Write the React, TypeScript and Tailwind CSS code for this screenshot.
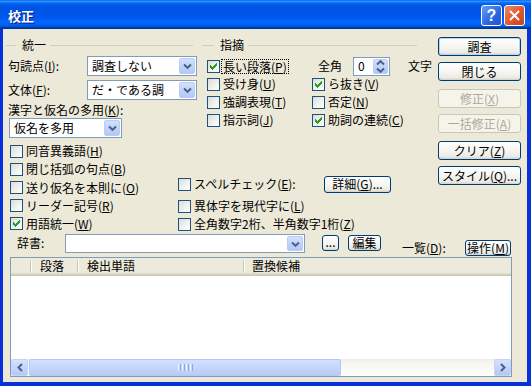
import React from "react";

const U = ({ c }: { c: string }) => (
  <span className="underline decoration-1 underline-offset-[1px]">{c}</span>
);

function Check({ on }: { on?: boolean }) {
  return (
    <span className="relative block w-[13px] h-[13px] shrink-0 border border-[#1C5180] bg-[linear-gradient(135deg,#DCDCD7_0%,#F4F4F0_65%,#FFFFFF_100%)]">
      {on && (
        <svg
          className="absolute left-[2px] top-[2px]"
          width="7"
          height="7"
          viewBox="0 0 7 7"
          shapeRendering="crispEdges"
        >
          <path
            fill="#21A121"
            d="M0 2h1v3h-1z M1 3h1v3h-1z M2 4h1v3h-1z M3 3h1v3h-1z M4 2h1v3h-1z M5 1h1v3h-1z M6 0h1v3h-1z"
          />
        </svg>
      )}
    </span>
  );
}

function Chevron({ up }: { up?: boolean }) {
  return (
    <svg width="9" height="6" viewBox="0 0 9 6">
      <path
        d={up ? "M1 4.5 L4.5 1.2 L8 4.5" : "M1 1.5 L4.5 4.8 L8 1.5"}
        stroke="#4D6185"
        strokeWidth="2"
        fill="none"
      />
    </svg>
  );
}

function Combo({ cls, text }: { cls: string; text?: string }) {
  return (
    <div className={`flex shrink-0 border border-[#7F9DB9] bg-white p-[1px] ${cls}`}>
      <span className="flex-1 flex items-center pl-[3px] whitespace-nowrap overflow-hidden">{text}</span>
      <span className="w-[16px] flex items-center justify-center rounded-[2px] border border-[#BACBF5] bg-[linear-gradient(180deg,#D3E0FD_0%,#C1D3FB_50%,#B3C8F7_100%)]">
        <Chevron />
      </span>
    </div>
  );
}

function Btn({
  children,
  cls,
  dis,
  def,
}: {
  children: React.ReactNode;
  cls: string;
  dis?: boolean;
  def?: boolean;
}) {
  const st = dis
    ? "border-[#C9C7BA] bg-[#F5F4EA] text-[#ACA899]"
    : "border-[#003C74] bg-[linear-gradient(180deg,#FFFFFF_0%,#F7F7F4_45%,#ECEBE6_85%,#D6D0C5_100%)] text-black";
  const d = def ? "shadow-[inset_0_0_0_1px_#B9D1F6]" : "";
  return (
    <div
      className={`flex items-center justify-center shrink-0 rounded-[3px] border whitespace-nowrap ${st} ${d} ${cls}`}
    >
      {children}
    </div>
  );
}

function CheckRow({ on, children, cls }: { on?: boolean; children: React.ReactNode; cls: string }) {
  return (
    <div className={`flex items-center ${cls}`}>
      <Check on={on} />
      <span className="ml-[3px] whitespace-nowrap">{children}</span>
    </div>
  );
}

function GroupHead({ title, cls, first }: { title: string; cls: string; first: string }) {
  return (
    <div className={`flex items-center h-[16px] mt-[8px] ${cls}`}>
      <span className={`h-px bg-[#D0D0BF] ${first}`} />
      <span className="ml-[6px] whitespace-nowrap">{title}</span>
      <span className="ml-[4px] h-px flex-1 bg-[#D0D0BF]" />
    </div>
  );
}

function Divider() {
  return <span className="w-[2px] h-[11px] self-center border-l border-[#C6C3B3] border-r border-r-white" />;
}

export default function App() {
  return (
    <div className="w-[531px] h-[386px] bg-[#0831D9] flex flex-col overflow-hidden text-[12px] leading-[14px] text-black font-['Noto_Sans_CJK_JP','Noto_Sans',sans-serif]">
      {/* Title bar */}
      <div className="h-[29px] shrink-0 flex items-center bg-[linear-gradient(180deg,#0058EE_0%,#3593FF_4%,#288EFF_6%,#127DFF_8%,#036FFC_10%,#0262EE_14%,#0057E5_20%,#0054E3_24%,#0055EB_56%,#005BF5_66%,#026AFE_76%,#0062EF_86%,#0052D6_92%,#0040AB_94%,#003092_100%)]">
        <span className="pl-[8px] pt-[3px] text-[13px] font-bold text-white [text-shadow:1px_1px_0_#0A1883]">
          校正
        </span>
        <div className="ml-auto mr-[6px] flex gap-[2px] pt-[2px]">
          <div className="w-[21px] h-[21px] rounded-[3px] border border-white flex items-center justify-center bg-[linear-gradient(135deg,#6A9CF7_0%,#2A64E3_60%,#1F55D3_100%)] text-white font-bold text-[16px] leading-[16px] font-['Liberation_Sans',sans-serif]">
            ?
          </div>
          <div className="w-[21px] h-[21px] rounded-[3px] border border-white flex items-center justify-center bg-[linear-gradient(135deg,#EE8A68_0%,#E05A33_50%,#C8411F_100%)]">
            <svg width="11" height="11" viewBox="0 0 11 11">
              <path d="M1 1 L10 10 M10 1 L1 10" stroke="white" strokeWidth="2" />
            </svg>
          </div>
        </div>
      </div>

      {/* Body */}
      <div className="ml-[3px] mr-[4px] mb-[4px] h-[353px] bg-[#ECE9D8] flex flex-col">
        {/* Top section */}
        <div className="flex h-[204px] shrink-0">
          <div className="w-[435px] flex flex-col">
            {/* Row 1 */}
            <div className="flex h-[112px]">
              {/* 統一 */}
              <div className="w-[195px] flex flex-col">
                <GroupHead title="統一" cls="pl-[3px] mr-[5px]" first="w-[10px]" />
                <div className="mt-[3px] h-[20px] flex items-center pl-[5px]">
                  <span className="w-[79px] whitespace-nowrap">
                    句読点(<U c="I" />):
                  </span>
                  <Combo cls="w-[110px] h-[20px]" text="調査しない" />
                </div>
                <div className="mt-[4px] h-[20px] flex items-center pl-[5px]">
                  <span className="w-[79px] whitespace-nowrap">
                    文体(<U c="F" />):
                  </span>
                  <Combo cls="w-[110px] h-[20px]" text="だ・である調" />
                </div>
                <div className="mt-[3px] h-[14px] pl-[5px] whitespace-nowrap">
                  漢字と仮名の多用(<U c="K" />):
                </div>
                <div className="mt-[1px] pl-[6px]">
                  <Combo cls="w-[113px] h-[20px]" text="仮名を多用" />
                </div>
              </div>
              {/* 指摘 */}
              <div className="w-[240px] flex flex-col">
                <GroupHead title="指摘" cls="pl-[4px] mr-[21px]" first="w-[12px]" />
                <div className="mt-[4px] flex flex-col pl-[9px]">
                  <div className="h-[18px] flex items-center">
                    <div className="w-[105px] flex items-center">
                      <Check on />
                      <span className="ml-[1px] px-[1px] border border-dotted border-black leading-[13px] whitespace-nowrap">
                        長い段落(<U c="P" />)
                      </span>
                    </div>
                    <span className="ml-[6px] w-[35px]">全角</span>
                    <div className="flex w-[37px] h-[19px] shrink-0 border border-[#7F9DB9] bg-white p-[1px]">
                      <span className="flex-1 flex items-center pl-[3px]">0</span>
                      <span className="w-[15px] flex flex-col items-center justify-center gap-[1px] rounded-[2px] border border-[#BACBF5] bg-[linear-gradient(180deg,#D3E0FD_0%,#C1D3FB_50%,#B3C8F7_100%)]">
                        <Chevron up />
                        <Chevron />
                      </span>
                    </div>
                    <span className="ml-[18px]">文字</span>
                  </div>
                  <div className="h-[18px] flex items-center">
                    <CheckRow cls="w-[105px]">
                      受け身(<U c="U" />)
                    </CheckRow>
                    <CheckRow on cls="">
                      ら抜き(<U c="V" />)
                    </CheckRow>
                  </div>
                  <div className="h-[18px] flex items-center">
                    <CheckRow cls="w-[105px]">
                      強調表現(<U c="T" />)
                    </CheckRow>
                    <CheckRow cls="">
                      否定(<U c="N" />)
                    </CheckRow>
                  </div>
                  <div className="h-[18px] flex items-center">
                    <CheckRow cls="w-[105px]">
                      指示詞(<U c="J" />)
                    </CheckRow>
                    <CheckRow on cls="">
                      助詞の連続(<U c="C" />)
                    </CheckRow>
                  </div>
                </div>
              </div>
            </div>
            {/* Row 2 */}
            <div className="flex h-[92px]">
              <div className="w-[175px] pl-[7px] pt-[1px] flex flex-col">
                <CheckRow cls="h-[19px]">
                  同音異義語(<U c="H" />)
                </CheckRow>
                <CheckRow cls="h-[19px]">
                  閉じ括弧の句点(<U c="B" />)
                </CheckRow>
                <CheckRow cls="h-[19px]">
                  送り仮名を本則に(<U c="O" />)
                </CheckRow>
                <CheckRow cls="h-[19px]">
                  リーダー記号(<U c="R" />)
                </CheckRow>
                <CheckRow on cls="h-[19px]">
                  用語統一(<U c="W" />)
                </CheckRow>
              </div>
              <div className="flex flex-col">
                <div className="mt-[34px] h-[19px] flex items-center">
                  <CheckRow cls="w-[146px]">
                    スペルチェック(<U c="E" />):
                  </CheckRow>
                  <Btn cls="w-[67px] h-[17px]">
                    詳細(<U c="G" />)...
                  </Btn>
                </div>
                <CheckRow cls="mt-[4px] h-[19px]">
                  異体字を現代字に(<U c="L" />)
                </CheckRow>
                <CheckRow cls="h-[18px]">
                  全角数字2桁、半角数字1桁(<U c="Z" />)
                </CheckRow>
              </div>
            </div>
          </div>
          {/* Right buttons */}
          <div className="w-[83px] flex flex-col">
            <Btn def cls="mt-[8px] h-[19px]">
              調査
            </Btn>
            <Btn cls="mt-[6px] h-[19px]">閉じる</Btn>
            <Btn dis cls="mt-[8px] h-[19px]">
              修正(<U c="X" />)
            </Btn>
            <Btn dis cls="mt-[6px] h-[19px]">
              一括修正(<U c="A" />)
            </Btn>
            <Btn cls="mt-[8px] h-[19px]">
              クリア(<U c="Z" />)
            </Btn>
            <Btn cls="mt-[6px] h-[19px]">
              スタイル(<U c="Q" />)...
            </Btn>
          </div>
        </div>

        {/* 辞書 row */}
        <div className="flex items-start h-[24px] pl-[14px] shrink-0">
          <span className="w-[48px] mt-[3px]">辞書:</span>
          <div className="mt-[1px]">
            <Combo cls="w-[240px] h-[19px]" />
          </div>
          <Btn cls="ml-[17px] mt-[2px] w-[17px] h-[16px]">
            <span className="leading-[10px] pb-[3px]">...</span>
          </Btn>
          <Btn cls="ml-[9px] mt-[2px] w-[33px] h-[16px]">編集</Btn>
          <span className="ml-[21px] w-[63px] mt-[8px] whitespace-nowrap">
            一覧(<U c="D" />):
          </span>
          <Btn cls="mt-[7px] w-[46px] h-[16px]">
            操作(<U c="M" />)
          </Btn>
        </div>

        {/* List */}
        <div className="ml-[7px] w-[502px] h-[120px] border border-[#7F9DB9] bg-white flex flex-col shrink-0">
          <div className="h-[18px] flex bg-[#EBEADB] shadow-[inset_0_-1px_0_#CBC7B8,inset_0_-2px_0_#D6D2C2,inset_0_-3px_0_#E2DECD] pb-[2px]">
            <span className="w-[19px]" />
            <Divider />
            <span className="w-[45px] pl-[8px] flex items-center">段落</span>
            <Divider />
            <span className="w-[164px] pl-[8px] flex items-center">検出単語</span>
            <Divider />
            <span className="pl-[7px] flex items-center">置換候補</span>
          </div>
          <div className="flex-1 bg-white" />
          <div className="h-[17px] flex bg-[linear-gradient(180deg,#EEEDE5_0%,#F7F6F1_30%,#FEFEFB_100%)]">
            <div className="w-[17px] h-[17px] rounded-[2px] border border-[#C3D3FD] flex items-center justify-center bg-[linear-gradient(180deg,#D5E2FD_0%,#C1D3FB_60%,#B3C8F7_100%)]">
              <svg width="6" height="9" viewBox="0 0 6 9">
                <path d="M5 1 L1.5 4.5 L5 8" stroke="#4D6185" strokeWidth="2" fill="none" />
              </svg>
            </div>
            <div className="ml-[1px] w-[312px] h-[17px] rounded-[2px] border border-[#B4C8F6] flex items-center justify-center bg-[linear-gradient(180deg,#D3E0FD_0%,#C6D6FC_50%,#B8CCF8_100%)]">
              <span className="flex gap-[1px] h-[7px]">
                <span className="w-px h-full bg-[#EEF4FE]" />
                <span className="w-px h-full bg-[#8CA6E6]" />
                <span className="w-px h-full bg-[#EEF4FE]" />
                <span className="w-px h-full bg-[#8CA6E6]" />
                <span className="w-px h-full bg-[#EEF4FE]" />
                <span className="w-px h-full bg-[#8CA6E6]" />
                <span className="w-px h-full bg-[#EEF4FE]" />
                <span className="w-px h-full bg-[#8CA6E6]" />
              </span>
            </div>
            <div className="flex-1" />
            <div className="w-[17px] h-[17px] rounded-[2px] border border-[#C3D3FD] flex items-center justify-center bg-[linear-gradient(180deg,#D5E2FD_0%,#C1D3FB_60%,#B3C8F7_100%)]">
              <svg width="6" height="9" viewBox="0 0 6 9">
                <path d="M1 1 L4.5 4.5 L1 8" stroke="#4D6185" strokeWidth="2" fill="none" />
              </svg>
            </div>
          </div>
        </div>
      </div>
    </div>
  );
}
